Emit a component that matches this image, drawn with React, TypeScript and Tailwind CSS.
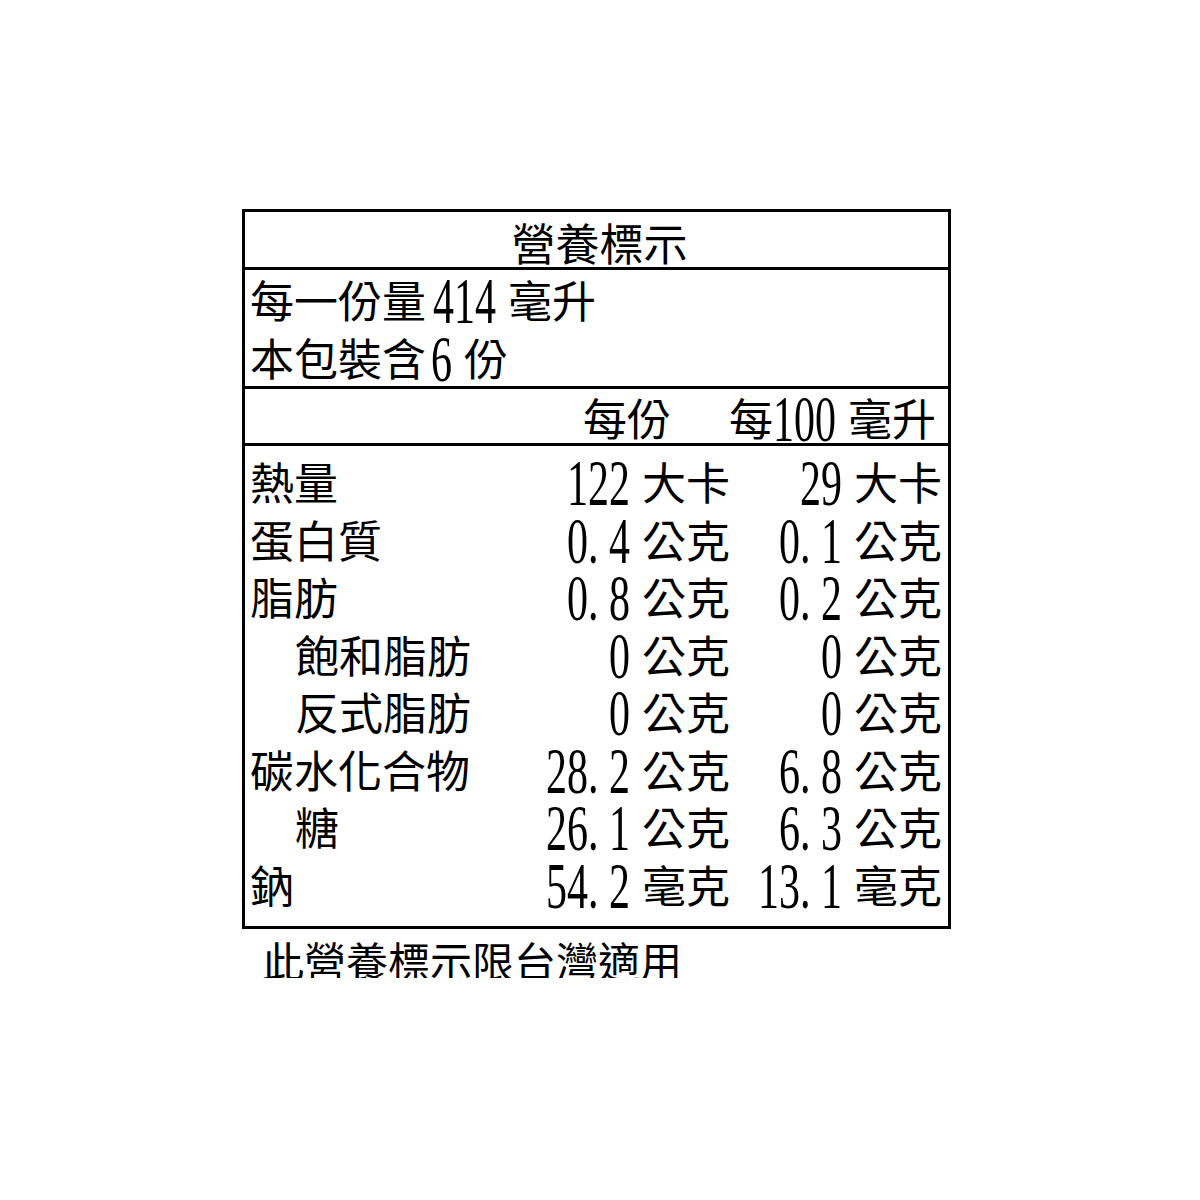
import React from 'react'

type Row = {
  label: string
  indent?: boolean
  a: string
  b: string
  unit: string
}

const rows: Row[] = [
  { label: '熱量', a: '122', b: '29', unit: '大卡' },
  { label: '蛋白質', a: '0.4', b: '0.1', unit: '公克' },
  { label: '脂肪', a: '0.8', b: '0.2', unit: '公克' },
  { label: '飽和脂肪', indent: true, a: '0', b: '0', unit: '公克' },
  { label: '反式脂肪', indent: true, a: '0', b: '0', unit: '公克' },
  { label: '碳水化合物', a: '28.2', b: '6.8', unit: '公克' },
  { label: '糖', indent: true, a: '26.1', b: '6.3', unit: '公克' },
  { label: '鈉', a: '54.2', b: '13.1', unit: '毫克' },
]

// tall, narrow serif digits like the printed label
function Num({ v, className = '' }: { v: string; className?: string }) {
  return (
    <span
      className={`inline-block origin-[50%_89%] translate-y-[6px] scale-y-[1.56] font-['Liberation_Serif',serif] text-[42px] leading-none ${className}`}
    >
      {v.split('').map((c, i) =>
        c === '.' ? (
          <span key={i} className="inline-block w-[21px] text-left">.</span>
        ) : (
          <span key={i}>{c}</span>
        )
      )}
    </span>
  )
}

function Value({ v, unit }: { v: string; unit: string }) {
  return (
    <div className="flex items-baseline justify-end whitespace-nowrap">
      <Num v={v} />
      <span className="ml-[12px]">{unit}</span>
    </div>
  )
}

export default function App() {
  return (
    <div className="h-[978px] w-[1200px] overflow-hidden bg-white font-['Noto_Sans_CJK_TC',sans-serif] text-[44px] text-black">
      <div className="pl-[242px] pt-[209px]">
        <div className="w-[709px] border-[3px] border-black">
          {/* title */}
          <div className="flex h-[58px] items-center justify-center border-b-[3px] border-black pl-[6px] pt-[4px] leading-none">
            營養標示
          </div>

          {/* serving size */}
          <div className="border-b-[3px] border-black pl-[5px]">
            <div className="flex h-[58px] items-baseline whitespace-nowrap leading-[58px]">
              <span>每一份量</span>
              <Num v="414" className="ml-[7px]" />
              <span className="ml-[12px]">毫升</span>
            </div>
            <div className="flex h-[58px] items-baseline whitespace-nowrap leading-[58px]">
              <span>本包裝含</span>
              <Num v="6" className="ml-[5px]" />
              <span className="ml-[12px]">份</span>
            </div>
          </div>

          {/* column header */}
          <div className="flex h-[57px] items-baseline whitespace-nowrap border-b-[3px] border-black leading-[57px]">
            <div className="flex-1" />
            <div className="w-[230px] pr-[47px] text-right">每份</div>
            <div className="flex w-[230px] items-baseline justify-end pr-[12px]">
              <span>每</span>
              <Num v="100" />
              <span className="ml-[12px]">毫升</span>
            </div>
          </div>

          {/* nutrients */}
          <div className="pb-[13px] pt-[7px]">
            {rows.map((r) => (
              <div key={r.label} className="flex h-[57.5px] items-baseline whitespace-nowrap leading-[57.5px]">
                <div className={r.indent ? 'flex-1 pl-[50px]' : 'flex-1 pl-[5px]'}>{r.label}</div>
                <div className="w-[240px] pr-[3px]">
                  <Value v={r.a} unit={r.unit} />
                </div>
                <div className="w-[215px] pr-[6px]">
                  <Value v={r.b} unit={r.unit} />
                </div>
              </div>
            ))}
          </div>
        </div>

        <div className="pl-[20px] pt-[8px] text-[42px] leading-[45px]">此營養標示限台灣適用</div>
      </div>
    </div>
  )
}
